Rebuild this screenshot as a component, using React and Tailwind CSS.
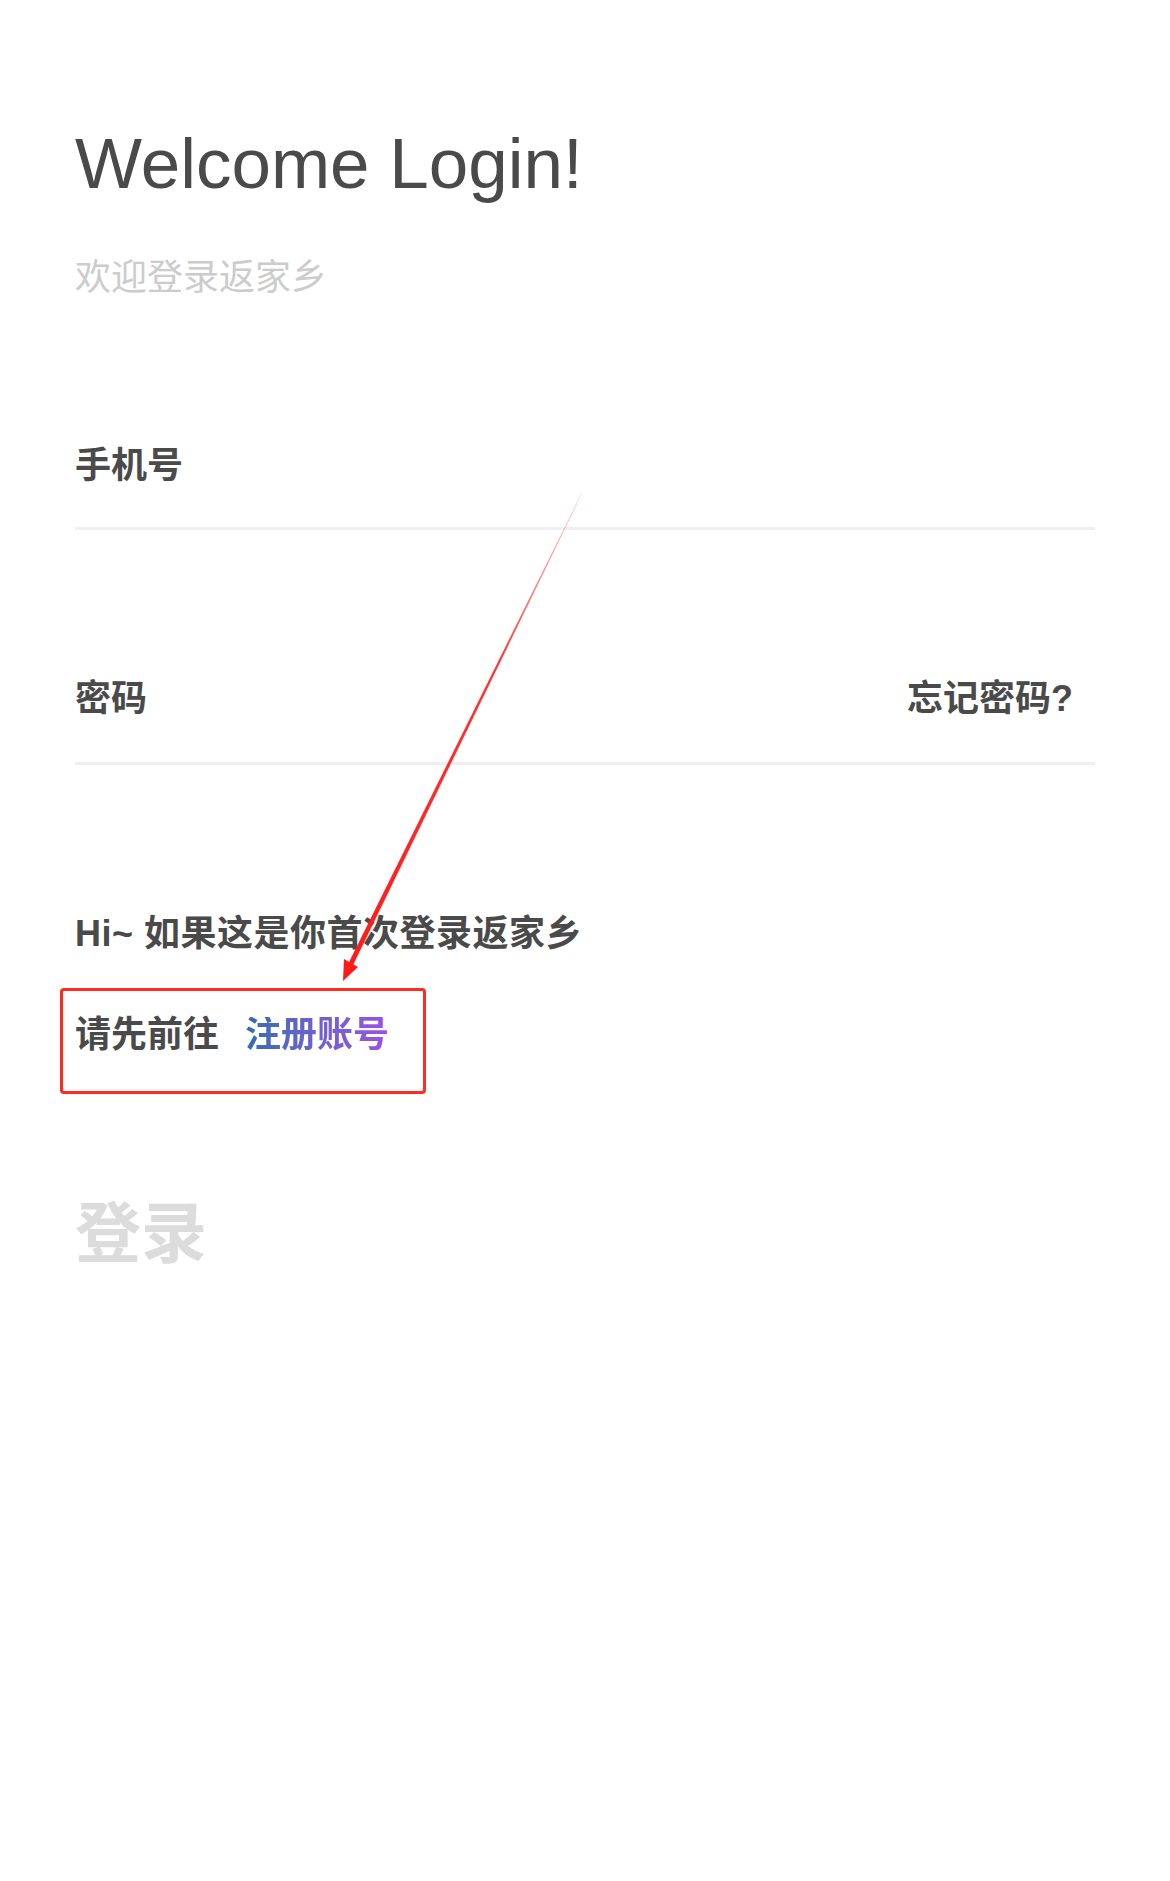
import { useState } from 'react'

const cjk = { fontFamily: '"Liberation Sans", "Noto Sans CJK SC", sans-serif' }

function Field({ label, extra, className }) {
    return (
        <div className={`flex items-center justify-between border-b-[3px] border-[#efefef] ${className}`}>
            <span className="text-[36px] leading-[36px] font-semibold text-[#4a4a4a]">{label}</span>
            {extra}
        </div>
    )
}

// red annotation arrow drawn over the page
function Arrow() {
    return (
        <svg className="absolute inset-0 pointer-events-none" width="1170" height="1881" viewBox="0 0 1170 1881">
            <defs>
                <linearGradient id="fade" x1="582" y1="493" x2="351" y2="964" gradientUnits="userSpaceOnUse">
                    <stop offset="0" stopColor="#ff3b3b" stopOpacity="0.25" />
                    <stop offset="0.35" stopColor="#ff2020" stopOpacity="0.9" />
                    <stop offset="1" stopColor="#ff1a1a" />
                </linearGradient>
            </defs>
            <polygon points="582.3,493.1 581.7,492.9 348.7,962.7 353.1,964.9" fill="url(#fade)" />
            <polygon points="343,981 358,967 344,959" fill="#ff1a1a" />
        </svg>
    )
}

export default function App() {
    const [phone] = useState('')

    return (
        <div className="relative min-h-[1881px] w-full bg-white overflow-hidden" style={cjk}>
            <div className="flex flex-col px-[75px]">
                <h1 className="mt-[128px] text-[71px] leading-none text-[#4a4a4a]" style={{ fontFamily: '"Liberation Sans", Arial, sans-serif' }}>
                    Welcome Login!
                </h1>
                <p className="mt-[61px] text-[36px] leading-[36px] text-[#cccccc]">欢迎登录返家乡</p>

                <Field label={phone || '手机号'} className="mt-[152px] pb-[43px]" />
                <Field
                    label="密码"
                    className="mt-[151px] pb-[45px]"
                    extra={<span className="pr-[22px] text-[36px] leading-[36px] font-semibold text-[#4a4a4a]">忘记密码?</span>}
                />

                <p className="mt-[151px] text-[36px] leading-[36px] font-semibold tracking-[0.5px] text-[#4a4a4a]">Hi~ 如果这是你首次登录返家乡</p>

                <div className="relative mt-[65px] flex items-center">
                    <span className="absolute -top-[29px] -left-[15px] w-[366px] h-[106px] border-[3px] border-[#ff2a20] rounded-[4px]"></span>
                    <span className="text-[36px] leading-[36px] font-semibold text-[#4a4a4a]">请先前往</span>
                    <span className="ml-[26px] text-[36px] leading-[36px] font-semibold text-transparent bg-clip-text bg-gradient-to-r from-[#2d6cb3] to-[#9a4fe8]">注册账号</span>
                </div>

                <button className="mt-[148px] self-start text-[66px] leading-[66px] font-semibold text-[#dcdcdc]">登录</button>
            </div>
            <Arrow />
        </div>
    )
}
